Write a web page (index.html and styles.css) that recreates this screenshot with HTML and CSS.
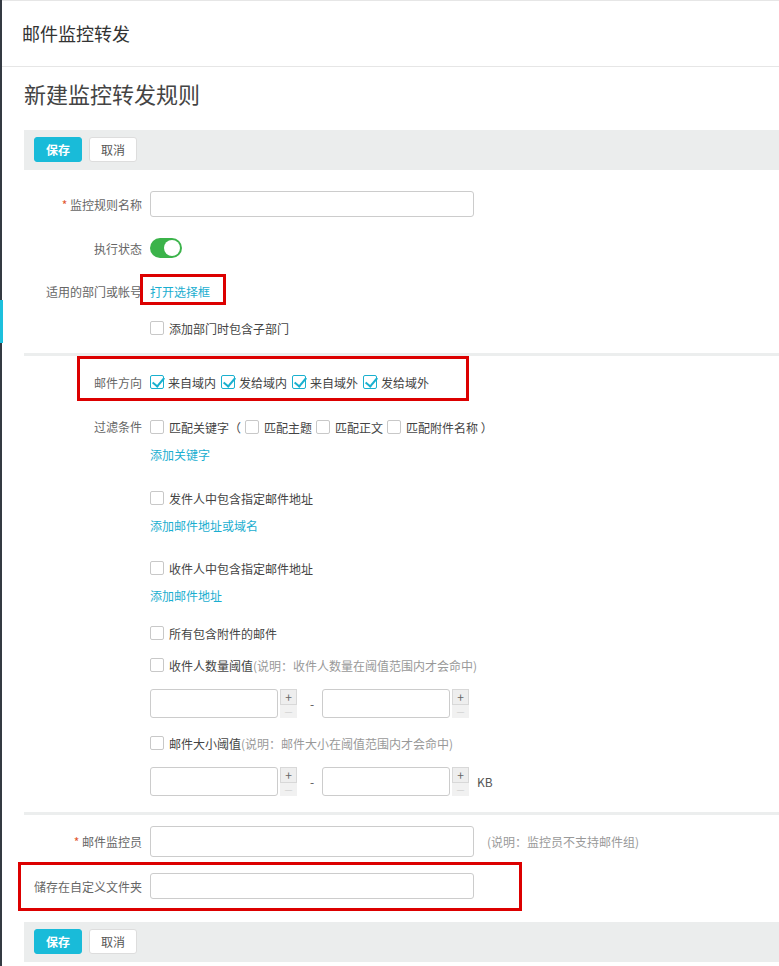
FILE: index.html
```html
<!DOCTYPE html>
<html lang="zh-CN">
  <head>
    <meta charset="UTF-8" />
    <meta name="viewport" content="width=device-width, initial-scale=1.0" />
    <title>邮件监控转发</title>
    <link rel="stylesheet" href="styles.css">
  </head>
  <body>
    <div class="page">
      <span class="navMark"></span>

      <div class="header">邮件监控转发</div>

      <div class="main">
        <h1 class="title">新建监控转发规则</h1>

        <div class="toolbar">
          <button class="btn btnPrimary">保存</button>
          <button class="btn">取消</button>
        </div>

        <div class="row rowName">
          <label class="label"><i class="req">*</i> 监控规则名称</label>
          <input class="text" type="text" />
        </div>

        <div class="row rowState">
          <label class="label">执行状态</label>
          <span class="toggle"><span class="knob"></span></span>
        </div>

        <div class="row rowScope">
          <label class="label">适用的部门或帐号</label>
          <a class="link">打开选择框</a>
        </div>

        <div class="row rowSub">
          <label class="label"></label>
          <span class="check"><span class="box"></span>添加部门时包含子部门</span>
        </div>

        <div class="sep sepFirst"></div>

        <div class="row rowDir">
          <label class="label">邮件方向</label>
          <span class="check"><span class="box on"></span>来自域内</span>
          <span class="check"><span class="box on"></span>发给域内</span>
          <span class="check"><span class="box on"></span>来自域外</span>
          <span class="check"><span class="box on"></span>发给域外</span>
        </div>

        <div class="row rowFilter">
          <label class="label">过滤条件</label>
          <div class="filter">
            <div class="line">
              <span class="check"><span class="box"></span>匹配关键字（</span>
              <span class="check"><span class="box"></span>匹配主题</span>
              <span class="check"><span class="box"></span>匹配正文</span>
              <span class="check"><span class="box"></span>匹配附件名称 ）</span>
            </div>
            <div class="line l7"><a class="link">添加关键字</a></div>
            <div class="line l24"><span class="check"><span class="box"></span>发件人中包含指定邮件地址</span></div>
            <div class="line l7"><a class="link">添加邮件地址或域名</a></div>
            <div class="line l23"><span class="check"><span class="box"></span>收件人中包含指定邮件地址</span></div>
            <div class="line l7"><a class="link">添加邮件地址</a></div>
            <div class="line l18"><span class="check"><span class="box"></span>所有包含附件的邮件</span></div>
            <div class="line l12"><span class="check"><span class="box"></span>收件人数量阈值<em class="hint">(说明：收件人数量在阈值范围内才会命中)</em></span></div>
            <div class="range">
              <input class="num" type="text" />
              <span class="spin"><b class="plus">+</b><b class="minus">—</b></span>
              <span class="dash">-</span>
              <input class="num" type="text" />
              <span class="spin"><b class="plus">+</b><b class="minus">—</b></span>
            </div>
            <div class="line l15"><span class="check"><span class="box"></span>邮件大小阈值<em class="hint">(说明：邮件大小在阈值范围内才会命中)</em></span></div>
            <div class="range">
              <input class="num" type="text" />
              <span class="spin"><b class="plus">+</b><b class="minus">—</b></span>
              <span class="dash">-</span>
              <input class="num" type="text" />
              <span class="spin"><b class="plus">+</b><b class="minus">—</b></span>
              <span class="unit">KB</span>
            </div>
          </div>
        </div>

        <div class="sep sepSecond"></div>

        <div class="row rowMonitor">
          <label class="label"><i class="req">*</i> 邮件监控员</label>
          <input class="text tall" type="text" />
          <em class="hint note">(说明：监控员不支持邮件组)</em>
        </div>

        <div class="row rowFolder">
          <label class="label">储存在自定义文件夹</label>
          <input class="text" type="text" />
        </div>

        <div class="toolbar toolbarBottom">
          <button class="btn btnPrimary">保存</button>
          <button class="btn">取消</button>
        </div>
      </div>

      <!-- 标注框 -->
      <span class="mark markScope"></span>
      <span class="mark markDir"></span>
      <span class="mark markFolder"></span>
    </div>
  </body>
</html>
```

FILE: styles.css
```css
* {
  margin: 0;
  padding: 0;
  box-sizing: border-box;
}
body {
  font-family: "Noto Sans CJK SC", "Noto Sans", "Liberation Sans", sans-serif;
  font-size: 12px;
  color: #555;
  background: #fff;
  overflow: hidden;
}
.page {
  position: relative;
  height: 966px;
  border-left: 2px solid #343a42;
}
.navMark {
  position: absolute;
  left: -2px;
  top: 300px;
  width: 3px;
  height: 43px;
  background: #1cc0dd;
}
.header {
  height: 67px;
  padding-left: 20px;
  border-top: 1px solid #e6e6e6;
  border-bottom: 1px solid #e6e6e6;
  font-size: 18px;
  line-height: 64px;
  color: #333;
}
.main {
  padding-left: 22px;
}
.title {
  height: 63px;
  padding-top: 10px;
  font-size: 22px;
  font-weight: normal;
  line-height: 32px;
  color: #444;
}
.toolbar {
  display: flex;
  gap: 7px;
  height: 40px;
  padding: 7px 10px;
  background: #ebeded;
}
.btn {
  height: 25px;
  padding: 0 11px;
  font-family: inherit;
  font-size: 12px;
  color: #555;
  background: #fff;
  border: 1px solid #ddd;
  border-radius: 3px;
}
.btnPrimary {
  width: 48px;
  color: #fff;
  font-weight: bold;
  background: #19bbd9;
  border-color: #19bbd9;
}
.toolbarBottom {
  margin-top: 23px;
}
.row {
  display: flex;
  align-items: center;
  min-height: 20px;
}
.label {
  width: 126px;
  flex: none;
  padding-right: 8px;
  text-align: right;
  color: #666;
  white-space: nowrap;
}
.req {
  font-style: normal;
  color: #e2572f;
}
.text {
  width: 324px;
  height: 26px;
  border: 1px solid #ccc;
  border-radius: 3px;
  outline: none;
}
.text.tall {
  height: 31px;
}
.link {
  color: #1aaed0;
  cursor: pointer;
}
.rowName {
  margin-top: 21px;
}
.rowState {
  margin-top: 21px;
}
.rowScope {
  margin-top: 23px;
}
.rowSub {
  margin-top: 17px;
}
.toggle {
  position: relative;
  width: 32px;
  height: 20px;
  border-radius: 10px;
  background: #3bb34a;
}
.toggle .knob {
  position: absolute;
  right: 2px;
  top: 2px;
  width: 16px;
  height: 16px;
  border-radius: 50%;
  background: #fff;
}
.check {
  display: inline-flex;
  align-items: center;
  margin-right: 5px;
  color: #444;
  white-space: nowrap;
}
.box {
  position: relative;
  width: 14px;
  height: 14px;
  margin-right: 5px;
  border: 1px solid #c8c8c8;
  border-radius: 2px;
  background: #fff;
}
.box.on {
  border-color: #1ab0cf;
}
.box.on::after {
  content: "";
  position: absolute;
  left: 4px;
  top: -1px;
  width: 5px;
  height: 10px;
  border-right: 2px solid #1ab0cf;
  border-bottom: 2px solid #1ab0cf;
  transform: rotate(40deg);
}
.rowDir .check {
  margin-right: 5px;
}
.rowDir .box {
  margin-right: 4px;
}
.sep {
  height: 3px;
  background: #eceeee;
}
.sepFirst {
  margin-top: 15px;
}
.sepSecond {
  margin-top: 16px;
}
.rowDir {
  margin-top: 16px;
}
.rowFilter {
  align-items: flex-start;
  margin-top: 25px;
}
.rowFilter .label {
  line-height: 20px;
}
.filter .line {
  display: flex;
  align-items: center;
  height: 20px;
}
.filter .line .check {
  margin-right: 4px;
}
.l7 { margin-top: 7px; }
.l12 { margin-top: 12px; }
.l15 { margin-top: 15px; }
.l18 { margin-top: 18px; }
.l23 { margin-top: 23px; }
.l24 { margin-top: 24px; }
.hint {
  font-style: normal;
  color: #999;
}
.range {
  display: flex;
  align-items: center;
  height: 29px;
  margin-top: 14px;
}
.num {
  width: 128px;
  height: 29px;
  border: 1px solid #ccc;
  border-radius: 3px;
  outline: none;
}
.spin {
  display: flex;
  flex-direction: column;
  width: 17px;
  height: 29px;
  margin-left: 2px;
}
.spin b {
  flex: 1;
  font-weight: normal;
  text-align: center;
  line-height: 13px;
}
.spin .plus {
  font-size: 12px;
  color: #666;
  background: #eee;
  border: 1px solid #d8d8d8;
}
.spin .minus {
  font-size: 9px;
  color: #ccc;
  background: #f1f1f1;
}
.dash {
  width: 25px;
  padding-left: 13px;
  color: #555;
}
.unit {
  margin-left: 8px;
  color: #555;
}
.rowMonitor {
  margin-top: 11px;
}
.note {
  margin-left: 13px;
}
.rowFolder {
  margin-top: 16px;
}
.mark {
  position: absolute;
  border: 3px solid #dc0000;
}
.markScope {
  left: 138px;
  top: 274px;
  width: 86px;
  height: 31px;
}
.markDir {
  left: 75px;
  top: 356px;
  width: 392px;
  height: 45px;
}
.markFolder {
  left: 16px;
  top: 862px;
  width: 504px;
  height: 49px;
}
```
